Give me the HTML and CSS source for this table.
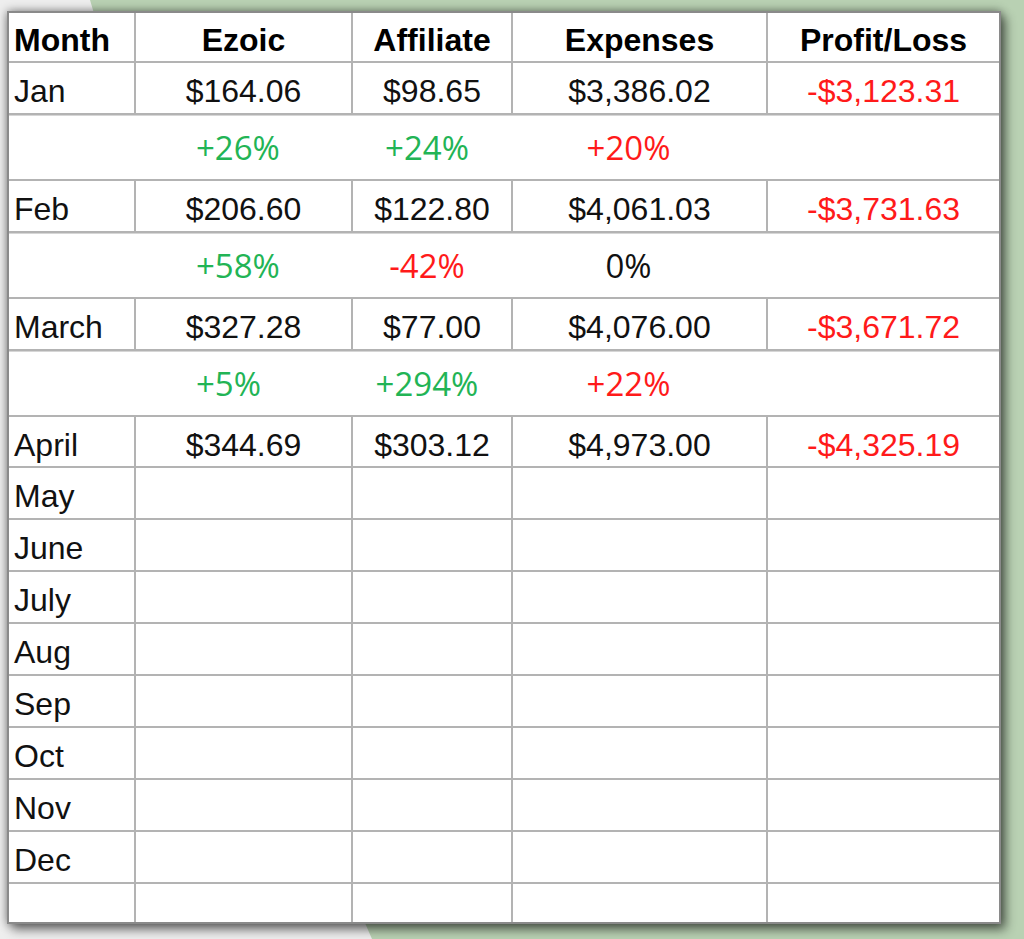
FILE: index.html
```html
<!DOCTYPE html>
<html lang="en">
<head>
<meta charset="utf-8">
<title>Monthly earnings</title>
<link rel="stylesheet" href="styles.css">
</head>
<body>
<div class="backdrop"></div>
<div class="page">
  <div class="sheet">
    <div class="row head">
      <div class="cell first">Month</div>
      <div class="cell">Ezoic</div>
      <div class="cell">Affiliate</div>
      <div class="cell">Expenses</div>
      <div class="cell">Profit/Loss</div>
    </div>
    <div class="row">
      <div class="cell first">Jan</div>
      <div class="cell">$164.06</div>
      <div class="cell">$98.65</div>
      <div class="cell">$3,386.02</div>
      <div class="cell neg">-$3,123.31</div>
    </div>
    <div class="row pct">
      <div class="cell"></div>
      <div class="cell p-ez up">+26%</div>
      <div class="cell p-af up">+24%</div>
      <div class="cell p-ex down">+20%</div>
      <div class="cell"></div>
    </div>
    <div class="row">
      <div class="cell first">Feb</div>
      <div class="cell">$206.60</div>
      <div class="cell">$122.80</div>
      <div class="cell">$4,061.03</div>
      <div class="cell neg">-$3,731.63</div>
    </div>
    <div class="row pct">
      <div class="cell"></div>
      <div class="cell p-ez up">+58%</div>
      <div class="cell p-af down">-42%</div>
      <div class="cell p-ex flat">0%</div>
      <div class="cell"></div>
    </div>
    <div class="row">
      <div class="cell first">March</div>
      <div class="cell">$327.28</div>
      <div class="cell">$77.00</div>
      <div class="cell">$4,076.00</div>
      <div class="cell neg">-$3,671.72</div>
    </div>
    <div class="row pct">
      <div class="cell"></div>
      <div class="cell p-ez up">+5%</div>
      <div class="cell p-af up">+294%</div>
      <div class="cell p-ex down">+22%</div>
      <div class="cell"></div>
    </div>
    <div class="row short">
      <div class="cell first">April</div>
      <div class="cell">$344.69</div>
      <div class="cell">$303.12</div>
      <div class="cell">$4,973.00</div>
      <div class="cell neg">-$4,325.19</div>
    </div>
    <div class="row"><div class="cell first">May</div><div class="cell"></div><div class="cell"></div><div class="cell"></div><div class="cell"></div></div>
    <div class="row"><div class="cell first">June</div><div class="cell"></div><div class="cell"></div><div class="cell"></div><div class="cell"></div></div>
    <div class="row"><div class="cell first">July</div><div class="cell"></div><div class="cell"></div><div class="cell"></div><div class="cell"></div></div>
    <div class="row"><div class="cell first">Aug</div><div class="cell"></div><div class="cell"></div><div class="cell"></div><div class="cell"></div></div>
    <div class="row"><div class="cell first">Sep</div><div class="cell"></div><div class="cell"></div><div class="cell"></div><div class="cell"></div></div>
    <div class="row"><div class="cell first">Oct</div><div class="cell"></div><div class="cell"></div><div class="cell"></div><div class="cell"></div></div>
    <div class="row"><div class="cell first">Nov</div><div class="cell"></div><div class="cell"></div><div class="cell"></div><div class="cell"></div></div>
    <div class="row"><div class="cell first">Dec</div><div class="cell"></div><div class="cell"></div><div class="cell"></div><div class="cell"></div></div>
    <div class="row blank"><div class="cell first"></div><div class="cell"></div><div class="cell"></div><div class="cell"></div><div class="cell"></div></div>
  </div>
</div>
</body>
</html>
```
FILE: styles.css
```css
* { box-sizing: border-box; }

html, body {
  margin: 0;
  padding: 0;
}

body {
  width: 1024px;
  height: 939px;
  overflow: hidden;
  background: #eeeeee;
  font-family: "Liberation Sans", Arial, sans-serif;
  color: #111;
  position: relative;
}

.backdrop {
  position: absolute;
  inset: 0;
  background: #b9d1b3;
  clip-path: polygon(90px 0, 100% 0, 100% 100%, 372px 100%, 365px 923px);
}

.page {
  position: relative;
  padding: 11px 0 0 7px;
}

.sheet {
  width: 994px;
  background: #fff;
  border: 2px solid #8a8a8a;
  box-shadow: 5px 6px 10px rgba(0, 0, 0, 0.45), 0 0 9px rgba(0, 0, 0, 0.45);
}

.row {
  display: grid;
  grid-template-columns: 127px 217px 160px 255px 1fr;
  height: 52px;
  border-bottom: 2px solid #b3b3b3;
}

.row.head { height: 50px; }
.row.short { height: 51px; }
.row.pct { height: 66px; border-top: 1px solid #d6d6d6; }
.row.blank { height: 38px; border-bottom: 0; }

.cell {
  border-right: 2px solid #b3b3b3;
  display: flex;
  align-items: center;
  justify-content: center;
  font-size: 32px;
  padding-top: 7px;
  white-space: nowrap;
}

.cell:last-child { border-right: 0; }

.cell.first {
  justify-content: flex-start;
  padding-left: 5px;
}

.head .cell { font-weight: bold; color: #000; }

.neg { color: #ff1a1a; }

.pct .cell {
  border-right: 0;
  padding-top: 0;
  font-family: "Open Sans", "Liberation Sans", sans-serif;
  font-size: 33px;
}

.pct .p-ez { justify-content: flex-start; padding-left: 60px; }
.pct .p-af { padding-right: 12px; }
.pct .p-ex { padding-right: 24px; }

.up { color: #22b455; }
.down { color: #ff1a1a; }
.flat { color: #111; }
```
